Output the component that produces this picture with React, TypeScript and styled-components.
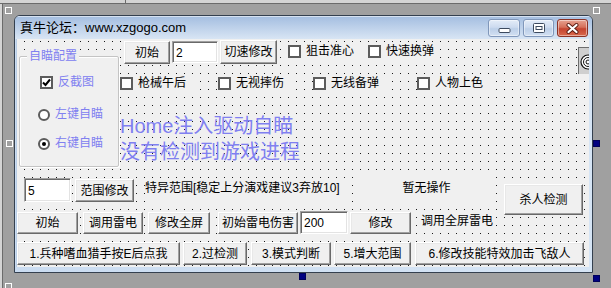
import React from "react";
import styled, { createGlobalStyle, css } from "styled-components";

const UI = `"Liberation Sans", "Noto Sans CJK SC", sans-serif`;
const LAV = "#8080f0";

const Global = createGlobalStyle`
  html, body { margin: 0; padding: 0; background: #a0a0a0; }
  body { font-family: ${UI}; }
`;

const Desktop = styled.div`
  position: relative;
  width: 611px;
  height: 288px;
  overflow: hidden;
  box-sizing: border-box;
  background: #a0a0a0;
  padding: 15px 0 0 14px;
  box-shadow: inset 0 3px #d4d4d4, inset 0 4px #6b6b6b, inset 2px 0 #d4d4d4, inset 3px 0 #6b6b6b;
  &::after {
    content: "";
    position: absolute;
    left: 125px;
    top: 0;
    width: 1px;
    height: 3px;
    background: #6b6b6b;
  }
`;

const Handle = styled.div<{ $x: number; $y: number; $filled?: boolean }>`
  position: absolute;
  left: ${(p) => p.$x}px;
  top: ${(p) => p.$y}px;
  width: 7px;
  height: 7px;
  box-sizing: border-box;
  ${(p) =>
    p.$filled
      ? css`
          background: #000080;
          border: 1px solid #00005a;
        `
      : css`
          background: transparent;
          border: 1px solid #ffffff;
        `}
`;

const Window = styled.div`
  width: 579px;
  height: 258px;
  box-sizing: border-box;
  border: 1px solid #34404f;
  border-radius: 6px 6px 0 0;
  overflow: hidden;
  display: flex;
  flex-direction: column;
  background: #d3e2f3;
`;

const TitleBar = styled.div`
  height: 23px;
  flex: none;
  display: flex;
  align-items: flex-start;
  background: linear-gradient(#a3bde0, #d8e5f4);
  box-shadow: inset 0 1px rgba(255, 255, 255, 0.55);
`;

const Title = styled.span`
  margin: 4px 0 0 5px;
  font: 13px/15px ${UI};
  color: #000;
  white-space: nowrap;
`;

const Caption = styled.div`
  margin: 3px 4px 0 auto;
  display: flex;
  gap: 3px;
`;

const CapBtn = styled.div<{ $w: number; $close?: boolean }>`
  width: ${(p) => p.$w}px;
  height: 18px;
  box-sizing: border-box;
  border-radius: 3px;
  border: 1px solid ${(p) => (p.$close ? "#8a3226" : "#8097ba")};
  background: ${(p) =>
    p.$close
      ? "linear-gradient(#e6a291, #d6705a 45%, #c4432f 55%, #d9694d)"
      : "linear-gradient(#e4edf8, #cddbef 45%, #bccfe8 55%, #d2e0f2)"};
  box-shadow: inset 0 0 0 1px rgba(255, 255, 255, 0.45);
  display: flex;
  align-items: center;
  justify-content: center;
`;

const Frame = styled.div`
  flex: 1;
  display: flex;
  padding: 0 3px 5px 1px;
  background: linear-gradient(90deg, #cadcf1, #d6e5f5);
`;

const Client = styled.div`
  flex: 1;
  display: flex;
  flex-direction: column;
  overflow: hidden;
  border-left: 1px solid #b8cde6;
  background:
    linear-gradient(90deg, #f0f0f0 7px, transparent 7px) 0px 3px / 8px 8px,
    linear-gradient(#f0f0f0 7px, transparent 7px) 0px 3px / 8px 8px,
    #1a1a1a;
`;

const TopArea = styled.div`
  height: 137px;
  flex: none;
  display: flex;
  align-items: flex-start;
`;

const GroupBox = styled.div`
  position: relative;
  margin: 17px 0 0 2px;
  width: 100px;
  height: 111px;
  box-sizing: border-box;
  border: 1px solid #c4c4c4;
  border-radius: 2px;
  box-shadow: inset 1px 1px #ffffff, 1px 1px #ffffff;
  background: #f0f0f0;
  display: flex;
  flex-direction: column;
  align-items: flex-start;
`;

const Legend = styled.span`
  position: absolute;
  top: -8px;
  left: 7px;
  padding: 0 2px;
  background: #f0f0f0;
  font: 12px/14px ${UI};
  color: ${LAV};
  white-space: nowrap;
`;

const RightCol = styled.div`
  flex: 1;
  margin-left: 1px;
  display: flex;
  flex-direction: column;
`;

const Row = styled.div<{ $h: number; $mt?: number }>`
  height: ${(p) => p.$h}px;
  margin-top: ${(p) => p.$mt ?? 0}px;
  flex: none;
  display: flex;
  align-items: flex-start;
`;

type Place = { $w?: number; $h?: number; $ml?: number; $mt?: number };

const place = css<Place>`
  flex: none;
  box-sizing: border-box;
  ${(p) => (p.$w !== undefined ? `width: ${p.$w}px;` : "")}
  ${(p) => (p.$h !== undefined ? `height: ${p.$h}px;` : "")}
  margin-left: ${(p) => p.$ml ?? 0}px;
  margin-top: ${(p) => p.$mt ?? 0}px;
`;

const Btn = styled.button<Place>`
  ${place}
  padding: 0;
  font: 12px/14px ${UI};
  color: #000;
  background: #f0f0f0;
  border: 1px solid;
  border-color: #ffffff #696969 #696969 #ffffff;
  box-shadow: inset -1px -1px #a0a0a0, inset 1px 1px #e8e8e8;
  white-space: nowrap;
  text-align: center;
`;

const Edit = styled.div<Place>`
  ${place}
  display: flex;
  align-items: center;
  padding: 1px 0 0 3px;
  background: #ffffff;
  border: 1px solid;
  border-color: #a0a0a0 #ffffff #ffffff #a0a0a0;
  box-shadow: inset 1px 1px #696969, inset -1px -1px #e3e3e3;
  font: 12px/14px ${UI};
  color: #000;
`;

const Label = styled.div<Place & { $lav?: boolean; $big?: boolean; $center?: boolean; $opaque?: boolean; $pt?: number }>`
  ${place}
  padding-top: ${(p) => p.$pt ?? 0}px;
  font: ${(p) => (p.$big ? `20px/26px ${UI}` : `12px/14px ${UI}`)};
  color: ${(p) => (p.$lav ? LAV : "#000")};
  text-align: ${(p) => (p.$center ? "center" : "left")};
  background: ${(p) => (p.$opaque ? "#f0f0f0" : "transparent")};
  white-space: nowrap;
`;

const Choice = styled.div<Place & { $lav?: boolean }>`
  ${place}
  height: 17px;
  display: flex;
  align-items: center;
  gap: 5px;
  background: #f0f0f0;
  font: 12px/17px ${UI};
  color: ${(p) => (p.$lav ? LAV : "#000")};
  white-space: nowrap;
`;

const Box = styled.span`
  width: 13px;
  height: 13px;
  flex: none;
  box-sizing: border-box;
  border: 2px solid #5c5c5c;
  background: #ffffff;
  display: flex;
  align-items: center;
  justify-content: center;
`;

const Circle = styled.span<{ $on?: boolean }>`
  width: 12px;
  height: 12px;
  flex: none;
  box-sizing: border-box;
  border-radius: 50%;
  border: 2px solid #5c5c5c;
  background: #ffffff;
  display: flex;
  align-items: center;
  justify-content: center;
  &::after {
    content: "";
    width: 4px;
    height: 4px;
    border-radius: 50%;
    background: ${(p) => (p.$on ? "#000" : "transparent")};
  }
`;

const SpinBox = styled.div`
  flex: none;
  margin: 8px 0 0 auto;
  width: 11px;
  height: 27px;
  box-sizing: border-box;
  overflow: hidden;
  background: #cfcfcf;
  border-left: 1px solid #6e6e6e;
  border-top: 1px solid #6e6e6e;
  padding: 6px 0 0 1px;
`;

const Check = ({ label, on, lav, ...rest }: { label: string; on?: boolean; lav?: boolean } & Place) => (
  <Choice $lav={lav} {...rest}>
    <Box>
      {on && (
        <svg width="9" height="9" viewBox="0 0 9 9">
          <path d="M1 4.5 L3.5 7 L8 1.5" fill="none" stroke="#000" strokeWidth="2" />
        </svg>
      )}
    </Box>
    {label}
  </Choice>
);

const Radio = ({ label, on, ...rest }: { label: string; on?: boolean } & Place) => (
  <Choice $lav {...rest}>
    <Circle $on={on} />
    {label}
  </Choice>
);

export default function App() {
  return (
    <>
      <Global />
      <Desktop>
        <Window>
          <TitleBar>
            <Title>真牛论坛：www.xzgogo.com</Title>
            <Caption>
              <CapBtn $w={32}>
                <svg width="13" height="12" viewBox="0 0 13 12">
                  <rect x="1" y="6.5" width="11" height="4" rx="1" fill="#fff" stroke="#3c4a5e" />
                </svg>
              </CapBtn>
              <CapBtn $w={31}>
                <svg width="12" height="10" viewBox="0 0 12 10">
                  <rect x="0.5" y="0.5" width="11" height="9" rx="1" fill="#fff" stroke="#3c4a5e" />
                  <rect x="3" y="3.5" width="6" height="3" fill="#fff" stroke="#3c4a5e" />
                </svg>
              </CapBtn>
              <CapBtn $w={31} $close>
                <svg width="15" height="11" viewBox="0 0 15 11">
                  <path d="M3.5 2 L11.5 9 M11.5 2 L3.5 9" stroke="#5b1d14" strokeWidth="4" strokeLinecap="round" />
                  <path d="M3.5 2 L11.5 9 M11.5 2 L3.5 9" stroke="#fff" strokeWidth="2.2" strokeLinecap="round" />
                </svg>
              </CapBtn>
            </Caption>
          </TitleBar>
          <Frame>
            <Client>
              <TopArea>
                <GroupBox>
                  <Legend>自瞄配置</Legend>
                  <Check label="反截图" on lav $ml={20} $mt={17} />
                  <Radio label="左键自瞄" $ml={18} $mt={15} />
                  <Radio label="右键自瞄" on $ml={18} $mt={12} />
                </GroupBox>
                <RightCol>
                  <Row $h={26}>
                    <Btn $ml={4} $mt={2} $w={46} $h={23}>初始</Btn>
                    <Edit $ml={2} $mt={2} $w={46} $h={22}>2</Edit>
                    <Btn $ml={2} $mt={1} $w={57} $h={24}>切速修改</Btn>
                    <Check label="狙击准心" $ml={11} $mt={4} $w={78} />
                    <Check label="快速换弹" $ml={2} $mt={4} $w={72} />
                    <SpinBox>
                      <svg width="16" height="16" viewBox="0 0 16 16">
                        <circle cx="8" cy="8" r="7" fill="#fff" stroke="#111" strokeWidth="1.2" />
                        <circle cx="8" cy="8" r="4.5" fill="none" stroke="#111" strokeWidth="1" />
                        <circle cx="8" cy="8" r="2" fill="none" stroke="#111" strokeWidth="1" />
                      </svg>
                    </SpinBox>
                  </Row>
                  <Row $h={17} $mt={10}>
                    <Check label="枪械午后" $w={78} />
                    <Check label="无视摔伤" $ml={20} $w={72} />
                    <Check label="无线备弹" $ml={23} $w={78} />
                    <Check label="人物上色" $ml={26} $w={72} />
                  </Row>
                  <Label $big $lav $mt={21}>
                    Home注入驱动自瞄
                    <br />
                    没有检测到游戏进程
                  </Label>
                </RightCol>
              </TopArea>
              <Row $h={35}>
                <Edit $ml={7} $mt={2} $w={47} $h={24}>5</Edit>
                <Btn $ml={4} $mt={3} $w={59} $h={23}>范围修改</Btn>
                <Label $ml={11} $mt={4} $w={205} $h={24} $pt={1} $opaque>
                  特异范围[稳定上分演戏建议3弃放10]
                </Label>
                <Label $ml={8} $w={137} $h={30} $pt={5} $center $opaque>
                  暂无操作
                </Label>
                <Btn $ml={9} $mt={8} $w={79} $h={31}>杀人检测</Btn>
              </Row>
              <Row $h={30}>
                <Btn $mt={1} $w={61} $h={22}>初始</Btn>
                <Btn $ml={5} $mt={1} $w={60} $h={22}>调用雷电</Btn>
                <Btn $ml={5} $mt={1} $w={62} $h={22}>修改全屏</Btn>
                <Btn $ml={8} $mt={1} $w={80} $h={22}>初始雷电伤害</Btn>
                <Edit $ml={2} $w={48} $h={23}>200</Edit>
                <Btn $ml={2} $mt={1} $w={61} $h={22}>修改</Btn>
                <Label $ml={10} $mt={2} $h={16} $pt={1} $opaque>
                  调用全屏雷电
                </Label>
              </Row>
              <Row $h={26}>
                <Btn $mt={1} $w={163} $h={23}>1.兵种嗜血猎手按E后点我</Btn>
                <Btn $ml={3} $mt={1} $w={64} $h={23}>2.过检测</Btn>
                <Btn $ml={4} $mt={1} $w={80} $h={23}>3.模式判断</Btn>
                <Btn $ml={3} $mt={1} $w={77} $h={23}>5.增大范围</Btn>
                <Btn $ml={4} $mt={1} $w={169} $h={23}>6.修改技能特效加击飞敌人</Btn>
              </Row>
            </Client>
          </Frame>
        </Window>
        <Handle $x={5} $y={7} />
        <Handle $x={6} $y={140} />
        <Handle $x={5} $y={283} />
        <Handle $x={593} $y={7} />
        <Handle $x={593} $y={140} $filled />
        <Handle $x={299} $y={273} $filled />
        <Handle $x={593} $y={275} $filled />
      </Desktop>
    </>
  );
}
